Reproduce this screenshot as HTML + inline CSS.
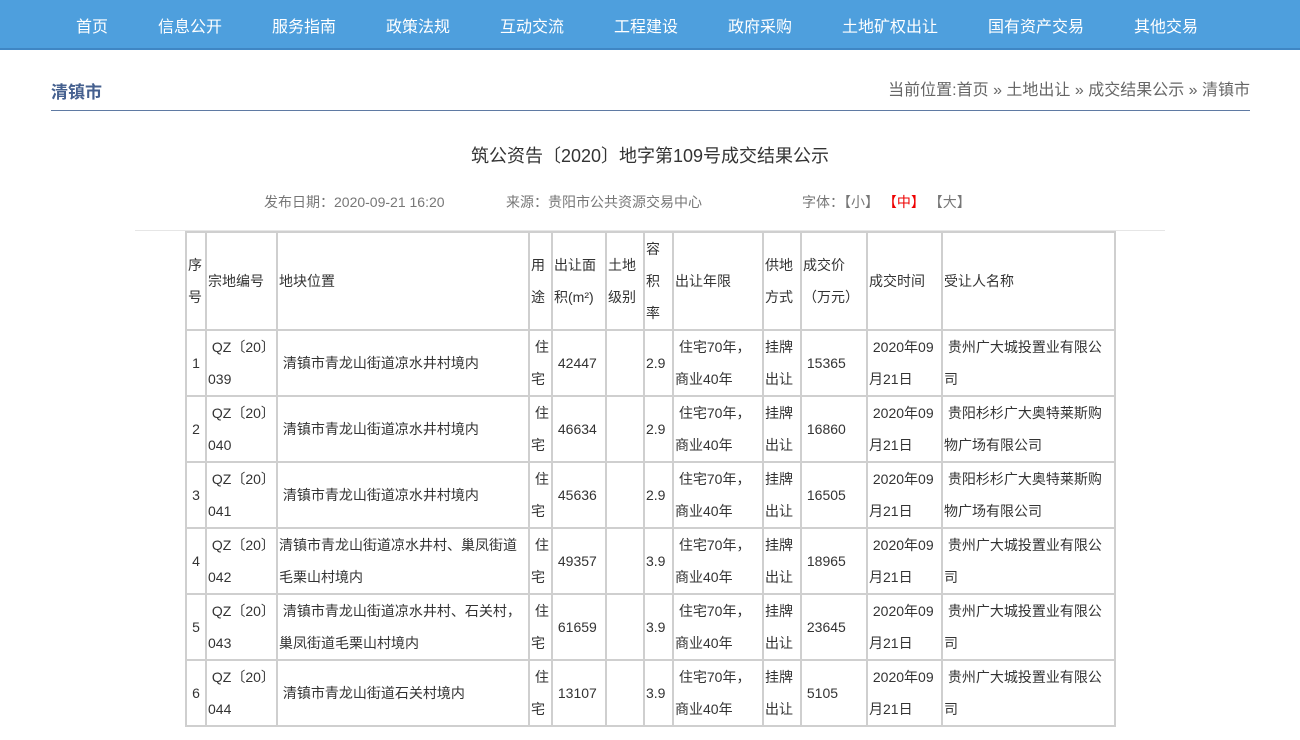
<!DOCTYPE html>
<html><head><meta charset="utf-8"><style>
*{margin:0;padding:0;box-sizing:border-box}
body{width:1300px;height:740px;overflow:hidden;background:#fff;font-family:"Liberation Sans","Noto Sans CJK SC",sans-serif;position:relative}
.nav{position:absolute;left:0;top:0;width:1300px;height:50px;background:#4e9fdd;border-bottom:2px solid #3f86c4}
.nav span{position:absolute;top:13px;color:#fff;font-size:16px;transform:translateX(-50%);white-space:nowrap}
.city{position:absolute;left:51px;top:78px;font-size:17px;font-weight:bold;color:#45608f}
.crumb{position:absolute;right:50px;top:76px;font-size:16px;color:#666}
.hl{position:absolute;left:51px;top:110px;width:1199px;height:1px;background:#5f7aa3}
.title{position:absolute;left:0;width:1300px;top:142px;text-align:center;font-size:18px;color:#333}
.meta{position:absolute;top:192px;font-size:14px;color:#777;white-space:nowrap}
.sep{position:absolute;left:135px;top:230px;width:1030px;height:1px;background:#e6e6e6}
table{position:absolute;left:185px;top:231px;border-collapse:collapse;table-layout:fixed;width:929px;font-size:14px;color:#333}
td{border:2px solid #cfcfcf;vertical-align:middle;line-height:32px;padding:0 0 0 1px;word-break:break-all;overflow:hidden}
td.c{text-align:center;padding:0}
tr.h td{height:98px}
tr.r td{height:66px}
.red{color:#e00}
</style></head><body>
<div class="nav">
<span style="left:92px">首页</span><span style="left:190px">信息公开</span><span style="left:304px">服务指南</span><span style="left:418px">政策法规</span><span style="left:532px">互动交流</span><span style="left:646px">工程建设</span><span style="left:760px">政府采购</span><span style="left:890px">土地矿权出让</span><span style="left:1036px">国有资产交易</span><span style="left:1166px">其他交易</span>
</div>
<div class="city">清镇市</div>
<div class="crumb">当前位置:首页 » 土地出让 » 成交结果公示 » 清镇市</div>
<div class="hl"></div>
<div class="title">筑公资告〔2020〕地字第109号成交结果公示</div>
<div class="meta" style="left:264px">发布日期：2020-09-21 16:20</div>
<div class="meta" style="left:506px">来源：贵阳市公共资源交易中心</div>
<div class="meta" style="left:802px">字体：【小】 <span class="red">【中】</span> 【大】</div>
<div class="sep"></div>
<table>
<colgroup><col style="width:20px"><col style="width:71px"><col style="width:252px"><col style="width:23px"><col style="width:54px"><col style="width:38px"><col style="width:29px"><col style="width:90px"><col style="width:38px"><col style="width:66px"><col style="width:75px"><col style="width:173px"></colgroup>
<tr class="h"><td>序<br>号</td><td>宗地编号</td><td>地块位置</td><td>用<br>途</td><td>出让面<br>积(m²)</td><td>土地<br>级别</td><td>容<br>积<br>率</td><td>出让年限</td><td>供地<br>方式</td><td>成交价<br>（万元）</td><td>成交时间</td><td>受让人名称</td></tr>
<tr class="r"><td class="c">1</td><td>&nbsp;QZ〔20〕<br>039</td><td>&nbsp;清镇市青龙山街道凉水井村境内</td><td>&nbsp;住<br>宅</td><td>&nbsp;42447</td><td></td><td>2.9</td><td>&nbsp;住宅70年，<br>商业40年</td><td>挂牌<br>出让</td><td>&nbsp;15365</td><td>&nbsp;2020年09<br>月21日</td><td>&nbsp;贵州广大城投置业有限公<br>司</td></tr>
<tr class="r"><td class="c">2</td><td>&nbsp;QZ〔20〕<br>040</td><td>&nbsp;清镇市青龙山街道凉水井村境内</td><td>&nbsp;住<br>宅</td><td>&nbsp;46634</td><td></td><td>2.9</td><td>&nbsp;住宅70年，<br>商业40年</td><td>挂牌<br>出让</td><td>&nbsp;16860</td><td>&nbsp;2020年09<br>月21日</td><td>&nbsp;贵阳杉杉广大奥特莱斯购<br>物广场有限公司</td></tr>
<tr class="r"><td class="c">3</td><td>&nbsp;QZ〔20〕<br>041</td><td>&nbsp;清镇市青龙山街道凉水井村境内</td><td>&nbsp;住<br>宅</td><td>&nbsp;45636</td><td></td><td>2.9</td><td>&nbsp;住宅70年，<br>商业40年</td><td>挂牌<br>出让</td><td>&nbsp;16505</td><td>&nbsp;2020年09<br>月21日</td><td>&nbsp;贵阳杉杉广大奥特莱斯购<br>物广场有限公司</td></tr>
<tr class="r"><td class="c">4</td><td>&nbsp;QZ〔20〕<br>042</td><td>清镇市青龙山街道凉水井村、巢凤街道<br>毛栗山村境内</td><td>&nbsp;住<br>宅</td><td>&nbsp;49357</td><td></td><td>3.9</td><td>&nbsp;住宅70年，<br>商业40年</td><td>挂牌<br>出让</td><td>&nbsp;18965</td><td>&nbsp;2020年09<br>月21日</td><td>&nbsp;贵州广大城投置业有限公<br>司</td></tr>
<tr class="r"><td class="c">5</td><td>&nbsp;QZ〔20〕<br>043</td><td>&nbsp;清镇市青龙山街道凉水井村、石关村，<br>巢凤街道毛栗山村境内</td><td>&nbsp;住<br>宅</td><td>&nbsp;61659</td><td></td><td>3.9</td><td>&nbsp;住宅70年，<br>商业40年</td><td>挂牌<br>出让</td><td>&nbsp;23645</td><td>&nbsp;2020年09<br>月21日</td><td>&nbsp;贵州广大城投置业有限公<br>司</td></tr>
<tr class="r"><td class="c">6</td><td>&nbsp;QZ〔20〕<br>044</td><td>&nbsp;清镇市青龙山街道石关村境内</td><td>&nbsp;住<br>宅</td><td>&nbsp;13107</td><td></td><td>3.9</td><td>&nbsp;住宅70年，<br>商业40年</td><td>挂牌<br>出让</td><td>&nbsp;5105</td><td>&nbsp;2020年09<br>月21日</td><td>&nbsp;贵州广大城投置业有限公<br>司</td></tr>
</table>
</body></html>
